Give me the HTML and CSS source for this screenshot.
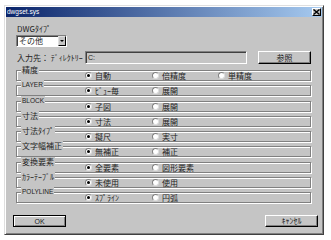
FILE: index.html
```html
<!DOCTYPE html>
<html lang="ja">
<head>
    <meta charset="UTF-8">
    <title>dwgset.sys</title>
    <link rel="stylesheet" href="styles.css">
</head>
<body>
    <div class="window">
        <div class="titlebar">
            <span class="title">dwgset.sys</span>
            <span class="close">
                <svg width="7" height="6" viewBox="0 0 7 6"><path d="M0.5 0.5 L6.5 5.5 M6.5 0.5 L0.5 5.5" stroke="#000" stroke-width="1.4"/></svg>
            </span>
        </div>

        <div class="content">
            <div class="field-label">DWGﾀｲﾌﾟ</div>
            <div class="select">
                <span class="select-text">その他</span>
                <span class="drop"><span class="arrow"></span></span>
            </div>

            <div class="path-row">
                <span class="path-label">入力先： ﾃﾞｨﾚｸﾄﾘｰ</span>
                <div class="path-input">C:</div>
                <button class="btn">参照</button>
            </div>

            <div class="groups">
                <div class="group">
                    <span class="legend">精度</span>
                    <div class="options">
                        <label class="opt"><span class="radio on"></span>自動</label>
                        <label class="opt"><span class="radio"></span>倍精度</label>
                        <label class="opt"><span class="radio"></span>単精度</label>
                    </div>
                </div>
                <div class="group">
                    <span class="legend latin">LAYER</span>
                    <div class="options">
                        <label class="opt"><span class="radio on"></span>ﾋﾞｭｰ毎</label>
                        <label class="opt"><span class="radio"></span>展開</label>
                    </div>
                </div>
                <div class="group">
                    <span class="legend latin">BLOCK</span>
                    <div class="options">
                        <label class="opt"><span class="radio on"></span>子図</label>
                        <label class="opt"><span class="radio"></span>展開</label>
                    </div>
                </div>
                <div class="group">
                    <span class="legend">寸法</span>
                    <div class="options">
                        <label class="opt"><span class="radio on"></span>寸法</label>
                        <label class="opt"><span class="radio"></span>展開</label>
                    </div>
                </div>
                <div class="group">
                    <span class="legend">寸法ﾀｲﾌﾟ</span>
                    <div class="options">
                        <label class="opt"><span class="radio on"></span>擬尺</label>
                        <label class="opt"><span class="radio"></span>実寸</label>
                    </div>
                </div>
                <div class="group">
                    <span class="legend">文字幅補正</span>
                    <div class="options">
                        <label class="opt"><span class="radio on"></span>無補正</label>
                        <label class="opt"><span class="radio"></span>補正</label>
                    </div>
                </div>
                <div class="group">
                    <span class="legend">変換要素</span>
                    <div class="options">
                        <label class="opt"><span class="radio on"></span>全要素</label>
                        <label class="opt"><span class="radio"></span>図形要素</label>
                    </div>
                </div>
                <div class="group">
                    <span class="legend">ｶﾗｰﾃｰﾌﾞﾙ</span>
                    <div class="options">
                        <label class="opt"><span class="radio on"></span>未使用</label>
                        <label class="opt"><span class="radio"></span>使用</label>
                    </div>
                </div>
                <div class="group">
                    <span class="legend latin">POLYLINE</span>
                    <div class="options">
                        <label class="opt"><span class="radio on"></span>ｽﾌﾟﾗｲﾝ</label>
                        <label class="opt"><span class="radio"></span>円弧</label>
                    </div>
                </div>
            </div>
        </div>

        <div class="footer">
            <button class="btn default latin-btn">OK</button>
            <button class="btn">ｷｬﾝｾﾙ</button>
        </div>
    </div>
</body>
</html>
```

FILE: styles.css
```css
body {
    margin: 0;
    background: #fff;
    font-family: "Noto Sans CJK JP", "Noto Sans", sans-serif;
    font-size: 8px;
    color: #1e1e1e;
}

.window {
    width: 316px;
    height: 226px;
    margin: 5px 0 0 4px;
    padding: 1px;
    background: #c5c5c5;
    border: 1px solid;
    border-color: #dfdfdf #404040 #404040 #dfdfdf;
    box-shadow: inset 1px 1px #fff, inset -1px -1px #808080;
    display: flex;
    flex-direction: column;
}

.titlebar {
    height: 10px;
    padding: 0 1px;
    background: linear-gradient(90deg, #0a246a, #a6caf0);
    display: flex;
    align-items: center;
    justify-content: space-between;
}

.title {
    font: 6.5px "Liberation Sans", sans-serif;
    color: #fff;
    line-height: 10px;
}

.close {
    width: 9px;
    height: 8px;
    box-sizing: border-box;
    background: #c5c5c5;
    border: 1px solid;
    border-color: #fff #000 #000 #fff;
    display: flex;
    align-items: center;
    justify-content: center;
}

.close svg {
    display: block;
}

.content {
    padding: 7px 11px 0 10px;
}

.field-label {
    line-height: 10px;
    margin-left: 1px;
}

.select {
    width: 51px;
    height: 12px;
    margin-top: 1px;
    box-sizing: border-box;
    background: #fff;
    border: 1px solid;
    border-color: #808080 #fff #fff #808080;
    box-shadow: inset 1px 1px #404040;
    display: flex;
    align-items: center;
    justify-content: space-between;
}

.select-text {
    padding-left: 2px;
    line-height: 10px;
}

.drop {
    width: 8px;
    height: 10px;
    box-sizing: border-box;
    background: #c5c5c5;
    border: 1px solid;
    border-color: #dfdfdf #000 #000 #dfdfdf;
    display: flex;
    align-items: center;
    justify-content: center;
}

.arrow {
    width: 0;
    height: 0;
    border-left: 2px solid transparent;
    border-right: 2px solid transparent;
    border-top: 2px solid #000;
}

.path-row {
    margin-top: 4px;
    height: 13px;
    display: flex;
    align-items: center;
}

.path-label {
    width: 69px;
    padding-left: 1px;
    box-sizing: border-box;
    white-space: nowrap;
    line-height: 10px;
}

.path-input {
    width: 162px;
    height: 13px;
    box-sizing: border-box;
    padding-left: 2px;
    border: 1px solid;
    border-color: #808080 #fff #fff #808080;
    box-shadow: inset 1px 1px #404040;
    font: 7px "Liberation Sans", sans-serif;
    line-height: 11px;
}

.btn {
    width: 53px;
    height: 13px;
    box-sizing: border-box;
    padding: 0;
    background: #c5c5c5;
    border: 1px solid;
    border-color: #fff #000 #000 #fff;
    box-shadow: inset -1px -1px #808080;
    font-family: inherit;
    font-size: 8px;
    line-height: 10px;
    color: #1e1e1e;
}

.path-row .btn {
    margin-left: auto;
}

.btn.default {
    border-color: #000;
    box-shadow: inset 1px 1px #fff, inset -1px -1px #808080;
}

.latin-btn {
    font: 7px "Liberation Sans", sans-serif;
}

.groups {
    margin-top: 6px;
    display: flex;
    flex-direction: column;
    gap: 4.25px;
}

.group {
    position: relative;
    height: 11px;
    box-sizing: border-box;
    border: 1px solid #808080;
    box-shadow: 1px 1px #fff, inset 1px 1px #fff;
}

.legend {
    position: absolute;
    top: -6px;
    left: 4px;
    padding: 0 1px;
    background: #c5c5c5;
    line-height: 10px;
    white-space: nowrap;
}

.legend.latin {
    font: 6.5px "Liberation Sans", sans-serif;
    line-height: 10px;
}

.options {
    height: 9px;
    padding-left: 68px;
    display: grid;
    grid-template-columns: 67px 66px 67px;
    align-items: center;
}

.opt {
    display: flex;
    align-items: center;
    gap: 3px;
    line-height: 9px;
    white-space: nowrap;
}

.radio {
    width: 7px;
    height: 7px;
    box-sizing: border-box;
    border-radius: 50%;
    background: #fff;
    border: 1px solid;
    border-color: #808080 #dfdfdf #dfdfdf #808080;
    display: flex;
    align-items: center;
    justify-content: center;
}

.radio.on::after {
    content: "";
    width: 3px;
    height: 3px;
    border-radius: 50%;
    background: #000;
}

.footer {
    margin-top: auto;
    margin-bottom: 6px;
    padding: 0 4px 0 7px;
    display: flex;
    justify-content: space-between;
}

.footer .btn {
    height: 12px;
}
```
